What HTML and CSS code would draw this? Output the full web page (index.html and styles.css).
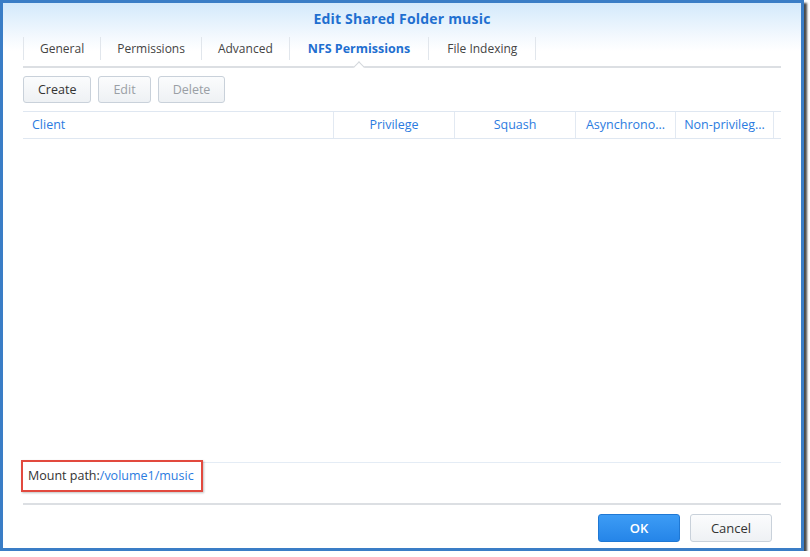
FILE: index.html
```html
<!DOCTYPE html>
<html lang="en">

<head>
    <meta charset="UTF-8">
    <title>Edit Shared Folder music</title>
    <link rel="stylesheet" href="styles.css">
</head>

<body>

    <div class="window">
        <div class="title">Edit Shared Folder music</div>

        <div class="tabs">
            <div class="tab">General</div>
            <div class="tab">Permissions</div>
            <div class="tab">Advanced</div>
            <div class="tab active">NFS Permissions</div>
            <div class="tab last">File Indexing</div>
        </div>

        <div class="toolbar">
            <button class="btn">Create</button>
            <button class="btn" disabled>Edit</button>
            <button class="btn" disabled>Delete</button>
        </div>

        <div class="grid-head">
            <div class="col left">Client</div>
            <div class="col">Privilege</div>
            <div class="col">Squash</div>
            <div class="col">Asynchrono...</div>
            <div class="col">Non-privileg...</div>
            <div class="col"></div>
        </div>

        <div class="grid-body"></div>

        <div class="mount-row">
            <span class="mount-path">Mount path:<span class="path">/volume1/music</span></span>
        </div>

        <div class="footer">
            <button class="btn primary">OK</button>
            <button class="btn">Cancel</button>
        </div>
    </div>

</body>

</html>
```

FILE: styles.css
```css
body {
    margin: 0;
    background: #fff;
    font-family: 'Open Sans', 'Liberation Sans', sans-serif;
    font-size: 12px;
    color: #333;
}

.window {
    width: 798px;
    height: 545px;
    border: 3px solid #3a7dc6;
    box-shadow: 3px 3px 2px #4a4a4a;
    background: linear-gradient(180deg, #d3e9fb 0px, #f4f9fe 34px, #fff 48px);
    display: flex;
    flex-direction: column;
}

.title {
    height: 32px;
    line-height: 32px;
    text-align: center;
    font-weight: bold;
    font-size: 14px;
    letter-spacing: 0.2px;
    color: #1f6fd0;
}

.tabs {
    display: flex;
    margin: 0 20px;
    height: 29px;
    padding-top: 2px;
    border-bottom: 2px solid #dcdfe3;
}

.tab {
    position: relative;
    height: 23px;
    line-height: 23px;
    padding: 0 16px;
    border-left: 1px solid #e1e6ec;
    color: #444;
}

.tab.last {
    padding: 0 18px;
    border-right: 1px solid #e1e6ec;
}

.tab.active {
    padding: 0 18px;
    color: #1f6fd0;
    font-weight: bold;
    font-size: 12.5px;
}

.tab.active::after {
    content: "";
    position: absolute;
    left: 50%;
    bottom: -11px;
    width: 7px;
    height: 7px;
    margin-left: -4px;
    background: #fff;
    border-left: 1px solid #d3d7dc;
    border-top: 1px solid #d3d7dc;
    transform: rotate(45deg);
}

.toolbar {
    display: flex;
    gap: 7px;
    margin: 8px 20px 0;
}

.btn {
    height: 27px;
    padding: 0 14px;
    border: 1px solid #c9d1da;
    border-radius: 3px;
    background: linear-gradient(180deg, #fbfcfd, #eef1f4);
    font-family: inherit;
    font-size: 12.5px;
    color: #333;
}

.btn:disabled {
    color: #9a9fa5;
}

.grid-head {
    display: grid;
    grid-template-columns: 310px 121px 121px 100px 98px 1fr;
    margin: 8px 20px 0;
    height: 26px;
    border-top: 1px solid #dfe7f1;
    border-bottom: 1px solid #dfe7f1;
}

.col {
    line-height: 26px;
    text-align: center;
    color: #2b7be0;
    font-size: 12.5px;
    border-left: 1px solid #e2e9f2;
}

.col.left {
    text-align: left;
    padding-left: 9px;
    border-left: none;
}

.grid-body {
    flex: 1;
}

.mount-row {
    margin: 0 20px;
    height: 40px;
    border-top: 1px solid #e4ecf5;
    border-bottom: 2px solid #dcdfe3;
}

.mount-path {
    display: inline-block;
    margin: -3px 0 0 -2px;
    padding: 0 7px 0 5px;
    height: 28px;
    line-height: 28px;
    font-size: 12.5px;
    border: 2px solid #e2493e;
    background: #fff;
    box-shadow: 1px 1px 2px rgba(0, 0, 0, 0.25);
}

.path {
    color: #2b7be0;
}

.footer {
    display: flex;
    justify-content: flex-end;
    gap: 10px;
    padding: 9px 29px 6px 0;
}

.footer .btn {
    width: 82px;
    height: 28px;
    font-size: 13px;
}

.btn.primary {
    background: linear-gradient(180deg, #3d9cf5, #2585e8);
    border-color: #1f78d4;
    color: #fff;
    font-weight: 600;
}
```
